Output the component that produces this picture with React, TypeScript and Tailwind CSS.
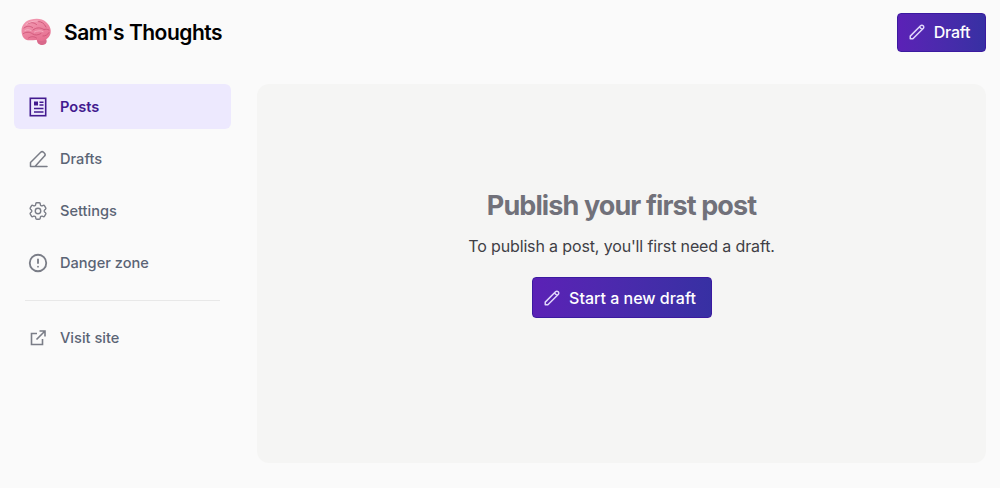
import React from "react";
import { HiOutlinePencil, HiOutlineExclamationCircle } from "react-icons/hi";
import { HiOutlineCog6Tooth } from "react-icons/hi2";

function Brain() {
  return (
    <svg width="32" height="28" viewBox="0 0 32 28" className="shrink-0">
      <defs>
        <linearGradient id="brainFill" x1="0.2" y1="0" x2="0.7" y2="1">
          <stop offset="0" stopColor="#f29ab2" />
          <stop offset="1" stopColor="#e66f90" />
        </linearGradient>
      </defs>
      <path d="M17 21c3-1.500 8-1.500 9 0 1.500 2.500.5 5.800-3.500 6-3.500.2-6-2-5.500-6z" fill="#d9688a" />
      <path d="M1.500 12.500C1.500 6.500 6 2.500 11 1.500c5.500-1.500 11.500-1 15 2.500 3.500 3 5.500 7 4.500 11.500-1 4-4.500 7-9 7.500-2 .2-3.500-1-5.500-1-3.500 0-7 1-10-.3C3 20.500 1.500 16.500 1.500 12.500z" fill="url(#brainFill)" />
      <path d="M4 10c3-2.500 6-2 8.500-.5M8 5.500c3-1.500 6-1 8.500 1M13 12c3-2.500 7-3 11-.5M3.500 15.500c3-2 6.500-1.500 9 .3s5.500 1.500 8.500-.3M18 3.500c3.500 0 6.500 2 8 5.500M8.500 20c2.500-1.800 5.500-1.800 8 0M23 18c2.500 0 4.500-1 6-3.500M24 11.500c1.500-.5 3-.5 5 .5" fill="none" stroke="#d25a7c" strokeWidth="1" strokeLinecap="round" />
      <path d="M6 6.500c3-2.500 8-4 12-3.500M5 12.500c2-1 4-1 6 0M14.500 14c3-1.500 6-1.500 8.500-.5" fill="none" stroke="#f7b8c9" strokeWidth="0.8" strokeLinecap="round" />
    </svg>
  );
}

function PostsIcon() {
  return (
    <svg viewBox="0 0 20 20" className="h-[20px] w-[20px] shrink-0" fill="none" stroke="currentColor">
      <rect x="2.300" y="1.300" width="15.400" height="17.400" strokeWidth="1.600" />
      <rect x="6" y="4.500" width="4" height="4" fill="currentColor" stroke="none" />
      <path d="M11.500 5.300H15.500M11.500 8H15.500M6 11.500H15.500M6 15H15.500" strokeWidth="1.500" />
    </svg>
  );
}

function DraftsIcon({ className }: { className?: string }) {
  return (
    <svg viewBox="0 0 20 20" className={className} fill="none" stroke="currentColor" strokeWidth="1.500" strokeLinejoin="round" strokeLinecap="round">
      <path d="M2.500 17.500V13.500L12.700 3.300a2 2 0 0 1 2.800 0l1 1a2 2 0 0 1 0 2.800L7 17.500ZM7 17.500H19" />
    </svg>
  );
}

function ExternalIcon({ className }: { className?: string }) {
  return (
    <svg viewBox="0 0 20 20" className={className} fill="none" stroke="currentColor" strokeWidth="1.600">
      <path d="M9 5.500H3.500V16.500H14.500V11M8.500 11.500L17 3M11.500 3H17V8.500" />
    </svg>
  );
}

function GearIcon({ className }: { className?: string }) {
  return <HiOutlineCog6Tooth className={className} />;
}

function AlertIcon({ className }: { className?: string }) {
  return <HiOutlineExclamationCircle className={className} />;
}

const items = [
  { label: "Drafts", Icon: DraftsIcon, big: false },
  { label: "Settings", Icon: GearIcon, big: true },
  { label: "Danger zone", Icon: AlertIcon, big: true },
];

function NavItem({ label, Icon, big }: { label: string; Icon: React.ComponentType<{ className?: string }>; big?: boolean }) {
  return (
    <a className="flex h-[44px] items-center gap-[12px] rounded-md px-[14px] text-[14.6px] font-medium text-[#5b6475]">
      <span className="flex h-[20px] w-[20px] shrink-0 items-center justify-center text-[#7a7d87]">
        <Icon className={big ? "h-[22px] w-[22px] shrink-0" : "h-[20px] w-[20px] shrink-0"} />
      </span>
      <span className="pt-[2px]">{label}</span>
    </a>
  );
}

export default function App() {
  return (
    <div className="flex h-[488px] w-[1000px] flex-col overflow-hidden bg-[#fafafa] font-['Inter',sans-serif]">
      <header className="flex h-[64px] items-center justify-between pl-[20px] pr-[14px]">
        <div className="flex items-center gap-[12px]">
          <Brain />
          <span className="pt-[1px] text-[21px] font-semibold tracking-[-0.5px] text-black">Sam's Thoughts</span>
        </div>
        <button className="flex h-[39px] w-[89px] items-center justify-center gap-[8px] rounded-[4px] border border-[#3b1aa0] bg-gradient-to-r from-[#5b21b6] to-[#3730a3] pr-[5px] text-[16px] font-medium tracking-[-0.2px] text-white">
          <HiOutlinePencil className="h-[18px] w-[18px] text-[#e0d6fb]" />
          Draft
        </button>
      </header>
      <div className="flex flex-1 gap-[26px] pb-[25px] pl-[14px] pr-[14px] pt-[20px]">
        <nav className="w-[217px] shrink-0">
          <a className="flex h-[45px] items-center gap-[12px] rounded-md bg-[#ede9fe] px-[14px] text-[14.6px] font-semibold text-[#431a8f]">
            <PostsIcon />
            <span className="pt-[3px]">Posts</span>
          </a>
          <div className="mt-[8px] flex flex-col gap-[8px]">
            {items.map((i) => (
              <NavItem key={i.label} {...i} />
            ))}
          </div>
          <div className="mx-[11px] my-[15px] border-t border-[#e8e8e8]" />
          <NavItem label="Visit site" Icon={ExternalIcon} />
        </nav>
        <main className="flex flex-1 flex-col items-center rounded-xl bg-[#f5f5f4] pt-[104px]">
          <h2 className="text-[27px] font-bold leading-[36px] tracking-[-0.9px] text-[#71717a]">Publish your first post</h2>
          <p className="mt-[10px] text-[16px] leading-[24px] tracking-[-0.14px] text-[#3f3f46]">To publish a post, you'll first need a draft.</p>
          <button className="mt-[19px] flex h-[41px] w-[180px] items-center justify-center gap-[8px] rounded-[4px] border border-[#3b1aa0] bg-gradient-to-r from-[#5b21b6] to-[#3730a3] pr-[4px] text-[16px] font-medium text-white">
            <HiOutlinePencil className="h-[18px] w-[18px] text-[#e0d6fb]" />
            Start a new draft
          </button>
        </main>
      </div>
    </div>
  );
}
